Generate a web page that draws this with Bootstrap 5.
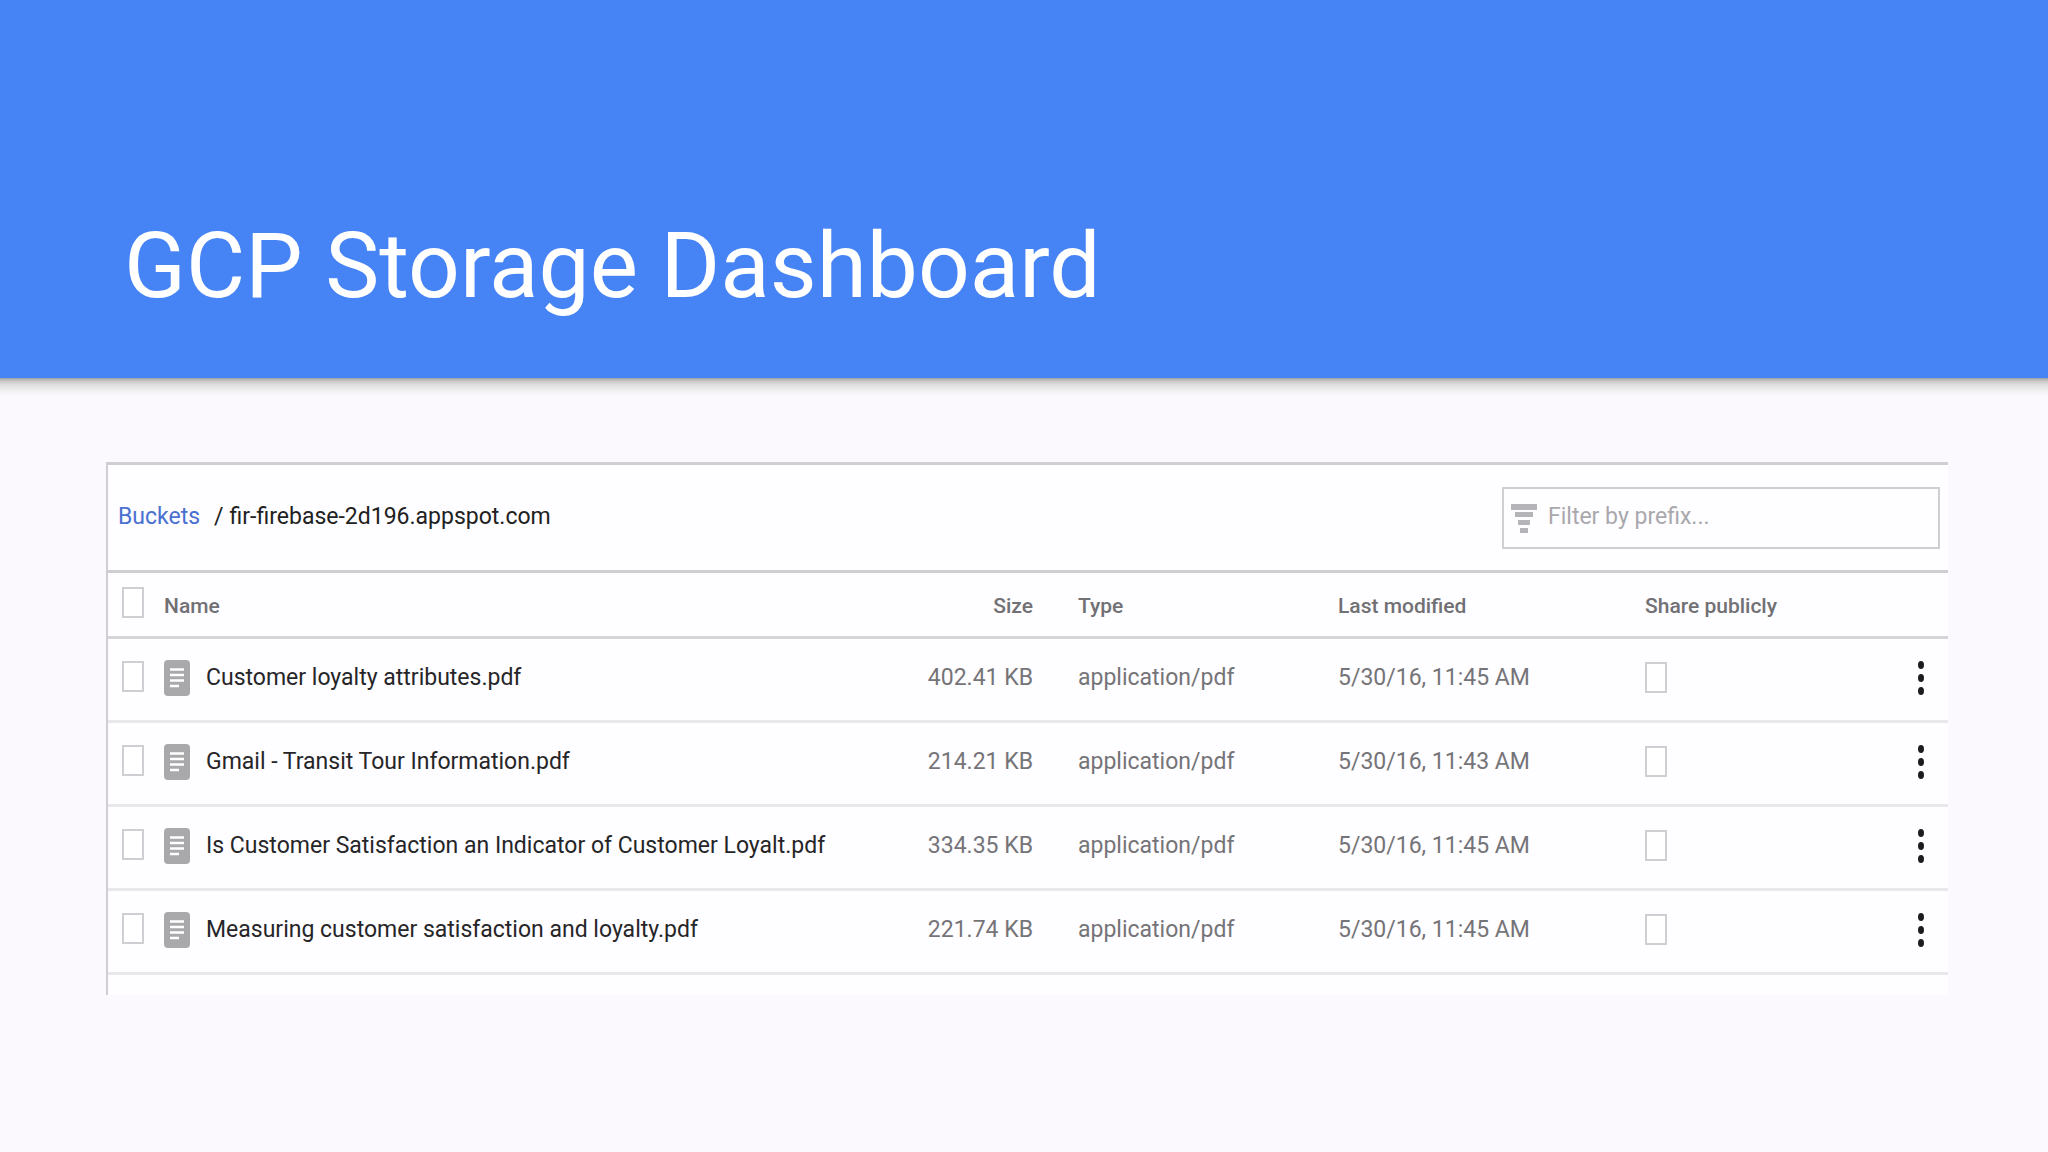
<!DOCTYPE html>
<html lang="en">
<head>
<meta charset="utf-8">
<meta name="viewport" content="width=device-width, initial-scale=1">
<title>GCP Storage Dashboard</title>
<link href="https://cdn.jsdelivr.net/npm/bootstrap@5.3.0/dist/css/bootstrap.min.css" rel="stylesheet">
<style>
  body { font-family: Roboto, "Liberation Sans", sans-serif; background: #fbf9fd; color: #212121; }
  .hero { background: #4683f4; color: #fff; min-height: 378px; padding: 0 124px 58px; }
  .hero h1 { font-size: 91px; line-height: 108px; font-weight: 400; }
  main { padding: 84px 100px 84px 106px;
    background: linear-gradient(#9c9fa3 0, #c9c8c7 3px, #e0dfdf 7px, #efeeef 12px, #fbf9fd 18px) no-repeat; }
  .browser { background: #fefdff; border-left: 2px solid #d0ced2; border-top: 3px solid #d0ced2; padding-bottom: 20px; }
  .toolbar { height: 105px; padding: 0 8px 0 10px; font-size: 23px; }
  .crumbs a { color: #4a70d0; }
  .crumbs { gap: 6px; }
  .filter { width: 438px; height: 62px; border: 2px solid #d0ced2; padding-left: 7px; gap: 11px; }
  .filter input { font: inherit; color: #616161; background: transparent; outline: 0; }
  .filter input::placeholder { color: #a9a8ac; opacity: 1; }
  .files { table-layout: fixed; width: 100%; font-size: 23px; line-height: 28px; color: #757478; }
  .files th, .files td { padding: 0; height: 84px; border-bottom: 3px solid #e9e7eb; vertical-align: middle; }
  .files thead th { height: 66px; border-bottom-color: #d6d4d8; font-size: 21px; font-weight: 500; color: #717074; padding-top: 2px; }
  .files thead tr { border-top: 3px solid #d0ced2; }
  .files .num { text-align: right; padding-right: 45px; }
  .files tbody th { font-weight: 400; color: #262528; }
  .files tbody th, .files tbody td { padding-bottom: 4px; }
  .c-pick { width: 56px; } .c-size { width: 205px; } .c-type { width: 260px; }
  .c-date { width: 307px; } .c-share { width: 200px; } .c-menu { width: 103px; }
  .tick { appearance: none; display: block; width: 22px; height: 31px; margin: 0; border: 2px solid #d0ced2; background: #fff; }
  .tick:checked { background: #4683f4; }
  .files .pick { padding-left: 14px; padding-bottom: 6px; }
  .more { width: 24px; height: 44px; margin-right: 15px; }
</style>
</head>
<body>
<header class="hero d-flex align-items-end"><h1 class="mb-0">GCP Storage Dashboard</h1></header>
<main>
  <section class="browser">
    <div class="toolbar d-flex align-items-center justify-content-between">
      <nav class="crumbs d-flex" aria-label="Breadcrumb">
        <a class="text-decoration-none me-2" href="#">Buckets</a><span>/</span><span>fir-firebase-2d196.appspot.com</span>
      </nav>
      <label class="filter d-flex align-items-center">
        <svg width="26" height="30" viewBox="0 0 26 30" fill="#b5b4b8" aria-hidden="true"><path d="M0 1h26v6H0zM4 9h18v5H4zM7 17h12v5H7zM9 25h8v5H9z"/></svg>
        <input class="border-0 p-0 flex-grow-1" type="text" placeholder="Filter by prefix..." aria-label="Filter by prefix">
      </label>
    </div>
    <table class="files">
      <colgroup><col class="c-pick"><col><col class="c-size"><col class="c-type"><col class="c-date"><col class="c-share"><col class="c-menu"></colgroup>
      <thead>
        <tr><th class="pick"><input class="tick" type="checkbox" aria-label="Select all"></th><th scope="col">Name</th><th scope="col" class="num">Size</th><th scope="col">Type</th><th scope="col">Last modified</th><th scope="col">Share publicly</th><th></th></tr>
      </thead>
      <tbody>
        <tr>
          <td class="pick"><input class="tick" type="checkbox" aria-label="Select Customer loyalty attributes.pdf"></td>
          <th scope="row"><div class="d-flex align-items-center gap-3"><svg width="26" height="36" viewBox="0 0 26 36" aria-hidden="true"><rect width="26" height="36" rx="4" fill="#a9a8ab"/><path d="M6 9.5h14M6 15h14M6 20.500h14M6 26h9" stroke="#fff" stroke-width="2.500"/></svg><span>Customer loyalty attributes.pdf</span></div></th>
          <td class="num">402.41 KB</td><td>application/pdf</td><td>5/30/16, 11:45 AM</td>
          <td><input class="tick" type="checkbox" aria-label="Share Customer loyalty attributes.pdf publicly"></td>
          <td><button class="more btn p-0 border-0 d-flex align-items-center justify-content-center ms-auto" type="button" aria-label="More actions"><svg width="8" height="36" viewBox="0 0 8 36" fill="#1c1b1e"><ellipse cx="4" cy="5" rx="3" ry="4"/><ellipse cx="4" cy="18" rx="3" ry="4"/><ellipse cx="4" cy="31" rx="3" ry="4"/></svg></button></td>
        </tr>
        <tr>
          <td class="pick"><input class="tick" type="checkbox" aria-label="Select Gmail - Transit Tour Information.pdf"></td>
          <th scope="row"><div class="d-flex align-items-center gap-3"><svg width="26" height="36" viewBox="0 0 26 36" aria-hidden="true"><rect width="26" height="36" rx="4" fill="#a9a8ab"/><path d="M6 9.5h14M6 15h14M6 20.500h14M6 26h9" stroke="#fff" stroke-width="2.500"/></svg><span>Gmail - Transit Tour Information.pdf</span></div></th>
          <td class="num">214.21 KB</td><td>application/pdf</td><td>5/30/16, 11:43 AM</td>
          <td><input class="tick" type="checkbox" aria-label="Share Gmail - Transit Tour Information.pdf publicly"></td>
          <td><button class="more btn p-0 border-0 d-flex align-items-center justify-content-center ms-auto" type="button" aria-label="More actions"><svg width="8" height="36" viewBox="0 0 8 36" fill="#1c1b1e"><ellipse cx="4" cy="5" rx="3" ry="4"/><ellipse cx="4" cy="18" rx="3" ry="4"/><ellipse cx="4" cy="31" rx="3" ry="4"/></svg></button></td>
        </tr>
        <tr>
          <td class="pick"><input class="tick" type="checkbox" aria-label="Select Is Customer Satisfaction an Indicator of Customer Loyalt.pdf"></td>
          <th scope="row"><div class="d-flex align-items-center gap-3"><svg width="26" height="36" viewBox="0 0 26 36" aria-hidden="true"><rect width="26" height="36" rx="4" fill="#a9a8ab"/><path d="M6 9.5h14M6 15h14M6 20.500h14M6 26h9" stroke="#fff" stroke-width="2.500"/></svg><span>Is Customer Satisfaction an Indicator of Customer Loyalt.pdf</span></div></th>
          <td class="num">334.35 KB</td><td>application/pdf</td><td>5/30/16, 11:45 AM</td>
          <td><input class="tick" type="checkbox" aria-label="Share Is Customer Satisfaction an Indicator of Customer Loyalt.pdf publicly"></td>
          <td><button class="more btn p-0 border-0 d-flex align-items-center justify-content-center ms-auto" type="button" aria-label="More actions"><svg width="8" height="36" viewBox="0 0 8 36" fill="#1c1b1e"><ellipse cx="4" cy="5" rx="3" ry="4"/><ellipse cx="4" cy="18" rx="3" ry="4"/><ellipse cx="4" cy="31" rx="3" ry="4"/></svg></button></td>
        </tr>
        <tr>
          <td class="pick"><input class="tick" type="checkbox" aria-label="Select Measuring customer satisfaction and loyalty.pdf"></td>
          <th scope="row"><div class="d-flex align-items-center gap-3"><svg width="26" height="36" viewBox="0 0 26 36" aria-hidden="true"><rect width="26" height="36" rx="4" fill="#a9a8ab"/><path d="M6 9.5h14M6 15h14M6 20.500h14M6 26h9" stroke="#fff" stroke-width="2.500"/></svg><span>Measuring customer satisfaction and loyalty.pdf</span></div></th>
          <td class="num">221.74 KB</td><td>application/pdf</td><td>5/30/16, 11:45 AM</td>
          <td><input class="tick" type="checkbox" aria-label="Share Measuring customer satisfaction and loyalty.pdf publicly"></td>
          <td><button class="more btn p-0 border-0 d-flex align-items-center justify-content-center ms-auto" type="button" aria-label="More actions"><svg width="8" height="36" viewBox="0 0 8 36" fill="#1c1b1e"><ellipse cx="4" cy="5" rx="3" ry="4"/><ellipse cx="4" cy="18" rx="3" ry="4"/><ellipse cx="4" cy="31" rx="3" ry="4"/></svg></button></td>
        </tr>
      </tbody>
    </table>
  </section>
</main>
<script src="https://cdn.jsdelivr.net/npm/bootstrap@5.3.0/dist/js/bootstrap.bundle.min.js"></script>
</body>
</html>
